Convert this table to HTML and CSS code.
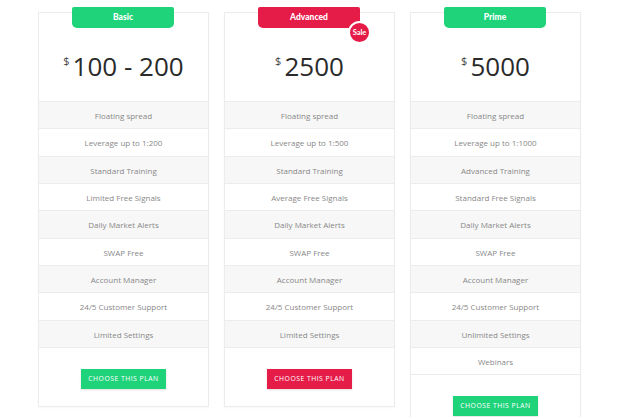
FILE: index.html
```html
<!DOCTYPE html>
<html lang="en">
  <head>
    <meta charset="UTF-8" />
    <meta name="viewport" content="width=device-width, initial-scale=1.0" />
    <title>pricing plans</title>
    <link rel="stylesheet" href="styles.css">
  </head>
  <body>
    <section id="plans">
      <div class="plan">
        <div class="tag green">Basic</div>
        <div class="price"><span class="cur">$</span>100 - 200</div>
        <ul class="features">
          <li>Floating spread</li>
          <li>Leverage up to 1:200</li>
          <li>Standard Training</li>
          <li>Limited Free Signals</li>
          <li>Daily Market Alerts</li>
          <li>SWAP Free</li>
          <li>Account Manager</li>
          <li>24/5 Customer Support</li>
          <li>Limited Settings</li>
        </ul>
        <div class="foot"><button class="green">Choose this plan</button></div>
      </div>
      <div class="plan">
        <div class="tag red">Advanced</div>
        <div class="sale">Sale</div>
        <div class="price"><span class="cur">$</span>2500</div>
        <ul class="features">
          <li>Floating spread</li>
          <li>Leverage up to 1:500</li>
          <li>Standard Training</li>
          <li>Average Free Signals</li>
          <li>Daily Market Alerts</li>
          <li>SWAP Free</li>
          <li>Account Manager</li>
          <li>24/5 Customer Support</li>
          <li>Limited Settings</li>
        </ul>
        <div class="foot"><button class="red">Choose this plan</button></div>
      </div>
      <div class="plan">
        <div class="tag green">Prime</div>
        <div class="price"><span class="cur">$</span>5000</div>
        <ul class="features">
          <li>Floating spread</li>
          <li>Leverage up to 1:1000</li>
          <li>Advanced Training</li>
          <li>Standard Free Signals</li>
          <li>Daily Market Alerts</li>
          <li>SWAP Free</li>
          <li>Account Manager</li>
          <li>24/5 Customer Support</li>
          <li>Unlimited Settings</li>
          <li>Webinars</li>
        </ul>
        <div class="foot"><button class="green">Choose this plan</button></div>
      </div>
    </section>
  </body>
</html>
```

FILE: styles.css
```css
* {
  margin: 0px;
  padding: 0px;
  box-sizing: border-box;
}
body {
  background-color: white;
  font-family: "Open Sans", "Liberation Sans", sans-serif;
  overflow: hidden;
}
#plans {
  display: flex;
  align-items: flex-start;
  gap: 15px;
  padding: 12px 0 0 38px;
}
.plan {
  position: relative;
  width: 171px;
  background-color: white;
  border: 1px solid #ececec;
  box-shadow: 0 1px 2px rgba(0, 0, 0, 0.03);
}
.tag {
  position: absolute;
  top: -6px;
  left: 33px;
  width: 102px;
  height: 21px;
  line-height: 21px;
  border-radius: 2px 2px 5px 5px;
  text-align: center;
  color: white;
  font-family: "Lato", "Open Sans", sans-serif;
  font-weight: 900;
  font-size: 8.5px;
}
.green {
  background-color: #1fd37b;
}
.red {
  background-color: #e51b48;
}
.sale {
  position: absolute;
  top: 8px;
  left: 123px;
  width: 23px;
  height: 23px;
  border-radius: 50%;
  border: 2px solid white;
  background-color: #e51b48;
  color: white;
  font-family: "Lato", sans-serif;
  font-weight: 700;
  font-size: 7.5px;
  line-height: 19px;
  text-align: center;
}
.price {
  height: 88px;
  padding-top: 34px;
  text-align: center;
  font-size: 26px;
  font-weight: 400;
  line-height: 28px;
  color: #2a2a2a;
}
.cur {
  font-size: 11px;
  color: #444;
  vertical-align: 11px;
  margin-right: 3px;
}
.features {
  list-style: none;
}
.features li {
  height: 27.35px;
  line-height: 27px;
  text-align: center;
  font-size: 8px;
  color: #888;
  border-top: 1px solid #ececec;
}
.features li:nth-child(odd) {
  background-color: #f7f7f7;
}
.foot {
  border-top: 1px solid #ececec;
  height: 59px;
  padding-top: 16px;
  text-align: center;
}
button {
  width: 85px;
  height: 20px;
  border: 0;
  color: white;
  font-family: "Open Sans", sans-serif;
  font-weight: 400;
  font-size: 6.8px;
  letter-spacing: 0.5px;
  text-transform: uppercase;
  box-shadow: 0 1px 2px rgba(0, 0, 0, 0.12);
}
```
